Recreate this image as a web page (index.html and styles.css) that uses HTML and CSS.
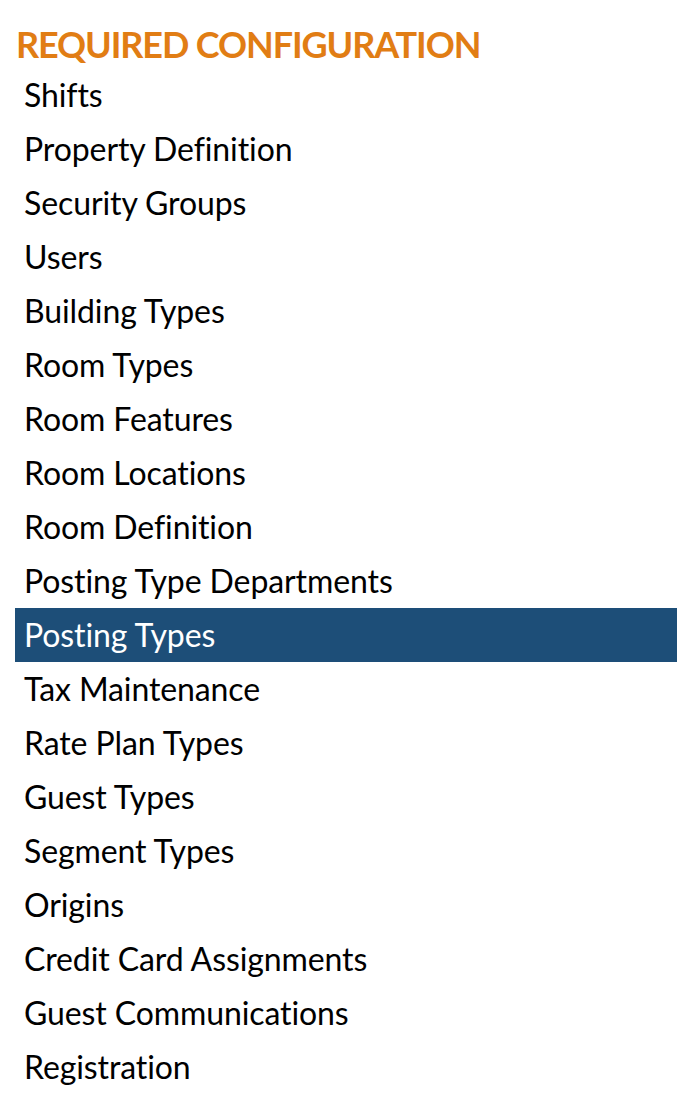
FILE: index.html
```html
<!DOCTYPE html>
<html>
<head>
<meta charset="utf-8">
<link rel="stylesheet" href="styles.css">
</head>
<body>
<div class="panel">
  <h2 class="title">REQUIRED CONFIGURATION</h2>
  <ul class="menu">
    <li class="item">Shifts</li>
    <li class="item">Property Definition</li>
    <li class="item">Security Groups</li>
    <li class="item">Users</li>
    <li class="item">Building Types</li>
    <li class="item">Room Types</li>
    <li class="item">Room Features</li>
    <li class="item">Room Locations</li>
    <li class="item">Room Definition</li>
    <li class="item">Posting Type Departments</li>
    <li class="item active">Posting Types</li>
    <li class="item">Tax Maintenance</li>
    <li class="item">Rate Plan Types</li>
    <li class="item">Guest Types</li>
    <li class="item">Segment Types</li>
    <li class="item">Origins</li>
    <li class="item">Credit Card Assignments</li>
    <li class="item">Guest Communications</li>
    <li class="item">Registration</li>
  </ul>
</div>
</body>
</html>
```

FILE: styles.css
```css
html, body {
  margin: 0;
  padding: 0;
  background: #ffffff;
}
.panel {
  padding: 24px 0 0 15px;
  font-family: Lato, "Open Sans", sans-serif;
  font-variant-ligatures: no-common-ligatures;
}
.title {
  margin: 0 0 4px 1px;
  font-size: 36px;
  line-height: 40px;
  font-weight: 700;
  color: #e17d14;
  letter-spacing: -1.1px;
}
.menu {
  list-style: none;
  margin: 0;
  padding: 0;
}
.item {
  font-size: 32px;
  line-height: 54px;
  height: 54px;
  padding-left: 9px;
  color: #000000;
  letter-spacing: -0.1px;
  white-space: nowrap;
}
.item.active {
  background: #1d4e78;
  color: #ffffff;
}
```
